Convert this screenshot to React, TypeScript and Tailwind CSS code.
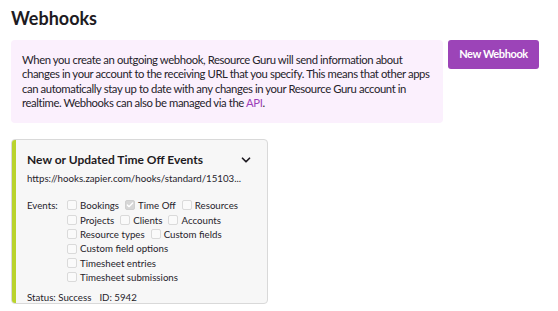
import { ChevronDown, Check } from "lucide-react"

const eventRows: { label: string; checked?: boolean }[][] = [
  [{ label: "Bookings" }, { label: "Time Off", checked: true }, { label: "Resources" }],
  [{ label: "Projects" }, { label: "Clients" }, { label: "Accounts" }],
  [{ label: "Resource types" }, { label: "Custom fields" }],
  [{ label: "Custom field options" }],
  [{ label: "Timesheet entries" }],
  [{ label: "Timesheet submissions" }],
]

function EventCheckbox({ label, checked }: { label: string; checked?: boolean }) {
  return (
    <span className="flex items-center gap-[3px]">
      <span
        className={
          checked
            ? "flex h-[10px] w-[10px] items-center justify-center rounded-[2px] border border-[#cfcfcf] bg-[#d6d6d6]"
            : "flex h-[10px] w-[10px] items-center justify-center rounded-[2px] border border-[#dadada] bg-[#fafafa]"
        }
      >
        {checked && <Check className="h-[8px] w-[8px] text-white" strokeWidth={4} />}
      </span>
      <span>{label}</span>
    </span>
  )
}

export default function App() {
  return (
    <div className="min-h-[311px] w-[558px] bg-white px-[11px] pt-[7px] font-['Lato',sans-serif] text-[#26232b]">
      <h1 className="text-[18px] font-bold leading-[22px] text-[#1e1b22]">Webhooks</h1>

      <div className="mt-[11px] flex items-start gap-[5px]">
        {/* Info box */}
        <div className="w-[432px] rounded-[4px] bg-[#fbf0fd] px-[11px] pb-[13px] pt-[13px] text-[11.3px] leading-[14.3px] tracking-[-0.4px]">
          When you create an outgoing webhook, Resource Guru will send information about changes in your
          account to the receiving URL that you specify. This means that other apps can automatically stay up
          to date with any changes in your Resource Guru account in realtime. Webhooks can also be managed via
          the <span className="text-[#9b3fb8]">API</span>.
        </div>
        <button className="h-[29px] w-[91px] rounded-[3px] bg-[#9c44b8] text-[11px] font-bold tracking-[-0.4px] text-white">
          New Webhook
        </button>
      </div>

      {/* Webhook card */}
      <div className="mt-[16px] flex w-[257px] overflow-hidden rounded-[4px] border border-[#d9d9d9] bg-[#f7f7f7]">
        <div className="w-[4px] shrink-0 bg-[#b9d32c]" />
        <div className="flex-1 pl-[11px] pr-[10px] pt-[12px]">
          <div className="flex items-center justify-between">
            <span className="text-[12px] font-bold leading-[16px] text-[#1e1b22]">New or Updated Time Off Events</span>
            <ChevronDown className="mr-[4px] h-[14px] w-[14px] text-[#1e1b22]" strokeWidth={3} />
          </div>
          <div className="mt-[3px] text-[9.7px] leading-[14px]">https://hooks.zapier.com/hooks/standard/15103...</div>

          <div className="mt-[13px] flex text-[9.7px] leading-[14.4px]">
            <span className="w-[40px] shrink-0">Events:</span>
            <div className="flex flex-col">
              {eventRows.map((row, i) => (
                <div key={i} className="flex gap-[6px]">
                  {row.map((e) => (
                    <EventCheckbox key={e.label} label={e.label} checked={e.checked} />
                  ))}
                </div>
              ))}
            </div>
          </div>

          <div className="mt-[6px] text-[9.7px] leading-[12px]">
            Status: Success<span className="ml-[8px]">ID: 5942</span>
          </div>
        </div>
      </div>
    </div>
  )
}
